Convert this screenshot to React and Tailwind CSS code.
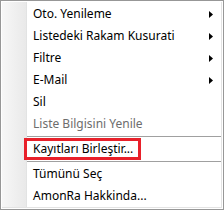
import React from "react";

const Arrow = () => (
  <svg width="4" height="7" viewBox="0 0 4 7" className="block">
    <path d="M0 0 L4 3.5 L0 7 Z" fill="#000" />
  </svg>
);

const Item = ({ label, sub, disabled }) => (
  <div className="h-[22px] flex items-center justify-between pl-[6px] pr-[8px]">
    <span className={disabled ? "text-[#6d6d6d]" : "text-black"}>{label}</span>
    {sub ? <Arrow /> : null}
  </div>
);

const Sep = () => (
  <div className="h-[3px] flex items-center">
    <div className="h-px w-full bg-[#a0a0a0]" />
  </div>
);

export default function App() {
  return (
    <div
      className="relative w-[224px] h-[210px] border border-[#979797] bg-white p-px box-border overflow-hidden"
      style={{ fontFamily: '"Noto Sans", "Open Sans", sans-serif' }}
    >
      <div className="flex h-full border-r border-b border-[#e3e3e3]">
        <div className="w-[25px] h-full bg-gradient-to-r from-[#f7f7f7] to-[#e9e9e9] border-r border-[#e2e3e3]" />
        <div className="flex-1 flex flex-col pt-[1px] text-[12px] leading-none">
          <Item label="Oto. Yenileme" sub />
          <Item label="Listedeki Rakam Kusurati" sub />
          <Item label="Filtre" sub />
          <Item label="E-Mail" sub />
          <Item label="Sil" />
          <Item label="Liste Bilgisini Yenile" disabled />
          <Sep />
          <Item label="Kayıtları Birleştir..." />
          <Sep />
          <Item label="Tümünü Seç" />
          <Item label="AmonRa Hakkinda..." />
        </div>
      </div>
      <div className="absolute left-[23px] top-[137px] w-[117px] h-[22px] border-[3px] border-[#e8202a]" />
    </div>
  );
}
